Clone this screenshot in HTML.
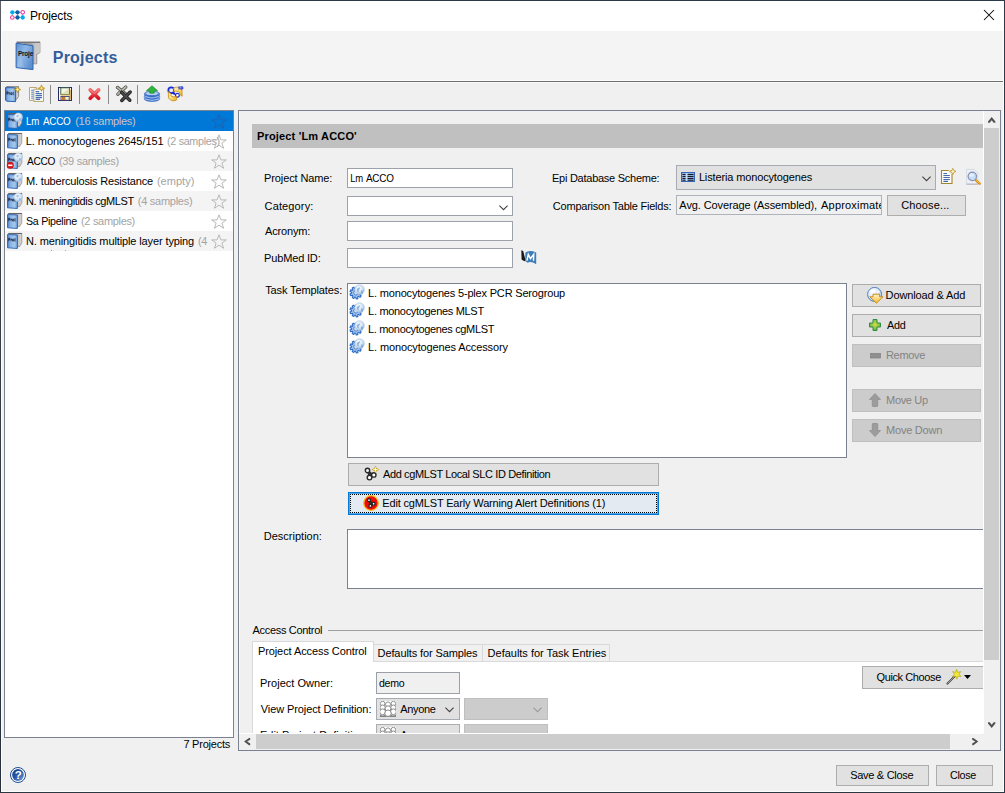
<!DOCTYPE html>
<html>
<head>
<meta charset="utf-8">
<title>Projects</title>
<style>
*{box-sizing:border-box;margin:0;padding:0}
html,body{width:1005px;height:793px;overflow:hidden;background:#f0f0f0}
body{font-family:"Liberation Sans",sans-serif;font-size:11px;color:#000;position:relative}
#win{position:absolute;left:0;top:0;width:1005px;height:793px;background:#f0f0f0;overflow:hidden}
.a{position:absolute}
svg{position:absolute;overflow:visible}
#title{position:absolute;left:2px;top:1px;width:1002px;height:30px;background:#fff}
#hdr{position:absolute;left:2px;top:31px;width:1001px;height:50px;background:#f4f4f4}
#sep{position:absolute;left:1px;top:80px;width:1003px;height:3px;background:#6e6e6e;border-top:1px solid #fcfcfc;border-bottom:1px solid #f9f9f9}
.tsep{position:absolute;top:85px;width:1px;height:19px;background:#8c8c8c}
#list{position:absolute;left:4px;top:110px;width:230px;height:628px;background:#fff;border:1px solid #7a828f}
.row{position:absolute;left:0;width:228px;height:20px;overflow:hidden}
.row.alt{background:#f4f4f4}
.row.sel{background:#0078d7}
.t{position:absolute;white-space:nowrap;font-size:11px;line-height:14px}
.g{color:#a3a3a3}
.sel .t{color:#fff}
.sel .g{color:#c9c5c6}
#panel{position:absolute;left:238px;top:110px;width:763px;height:641px;border:1px solid #7a828f;background:#f0f0f0;overflow:hidden}
.inp{position:absolute;background:#fff;border:1px solid #9ca1ab}
.lb{position:absolute;background:#fff;border:1px solid #7a828f}
.ro{background:#f0f0f0;border-color:#adb2bb}
.btn{position:absolute;background:#e1e1e1;border:1px solid #adadad}
.btn.dis{background:#cccccc;border-color:#bfbfbf}
.dis{color:#838383}
</style>
</head>
<body>
<div id="win">
<svg width="0" height="0" style="left:0;top:0"><defs>
<linearGradient id="gb" x1="0" y1="0" x2="1" y2="1"><stop offset="0" stop-color="#8fb4e3"/><stop offset="1" stop-color="#4478bd"/></linearGradient>
<linearGradient id="gg" x1="0" y1="0" x2="1" y2="0"><stop offset="0" stop-color="#8e8e8e"/><stop offset="1" stop-color="#d9d9d9"/></linearGradient>
<radialGradient id="gl" cx=".4" cy=".35" r=".7"><stop offset="0" stop-color="#ffffff"/><stop offset=".6" stop-color="#cfe2f4"/><stop offset="1" stop-color="#8db4dc"/></radialGradient>
<linearGradient id="gy" x1="0" y1="0" x2="0" y2="1"><stop offset="0" stop-color="#ffe680"/><stop offset="1" stop-color="#e8a200"/></linearGradient>
<linearGradient id="gd" x1="0" y1="0" x2="0" y2="1"><stop offset="0" stop-color="#9cc0f0"/><stop offset="1" stop-color="#2f66c4"/></linearGradient>
<linearGradient id="gb2" x1="0" y1="0" x2="1" y2="0"><stop offset="0" stop-color="#3f78c6"/><stop offset=".25" stop-color="#86b0e4"/><stop offset=".7" stop-color="#a6c8ee"/><stop offset="1" stop-color="#6c9cd8"/></linearGradient>
<linearGradient id="gr" x1="0" y1="0" x2="0" y2="1"><stop offset="0" stop-color="#f26a6a"/><stop offset="1" stop-color="#d41420"/></linearGradient>
<radialGradient id="gl2" cx=".35" cy=".3" r=".8"><stop offset="0" stop-color="#ffffff"/><stop offset=".5" stop-color="#dbe9f8"/><stop offset="1" stop-color="#a9c6ea"/></radialGradient>
<linearGradient id="gy2" x1="0" y1="0" x2="0" y2="1"><stop offset="0" stop-color="#fff6cc"/><stop offset="1" stop-color="#f6b830"/></linearGradient>
<radialGradient id="gp" cx=".5" cy=".45" r=".6"><stop offset="0" stop-color="#d4dc48"/><stop offset=".6" stop-color="#8cc444"/><stop offset="1" stop-color="#3fa046"/></radialGradient>
<linearGradient id="gg2" x1="0" y1="0" x2="1" y2="0"><stop offset="0" stop-color="#7e7e7e"/><stop offset=".6" stop-color="#a8a8a8"/><stop offset="1" stop-color="#c9c9c9"/></linearGradient>
<linearGradient id="gb3" x1="0" y1="0" x2="1" y2=".6"><stop offset="0" stop-color="#5b8ed0"/><stop offset=".5" stop-color="#8fb8e6"/><stop offset="1" stop-color="#5d8fd0"/></linearGradient>
<linearGradient id="gh" x1="0" y1="0" x2="1" y2="1"><stop offset="0" stop-color="#123f88"/><stop offset=".5" stop-color="#2a5aa6"/><stop offset="1" stop-color="#7aa2da"/></linearGradient>
<linearGradient id="gy3" x1="0" y1="0" x2="1" y2="1"><stop offset="0" stop-color="#fff8d8"/><stop offset=".5" stop-color="#fbdc78"/><stop offset="1" stop-color="#e9a818"/></linearGradient>
</defs></svg>
<div id="title"></div>
<svg style="left:10px;top:10px" width="15" height="10" viewBox="0 0 15 10"><path d="M2.3 2.3H12.7M2.3 7.5H12.7M2.3 2.3V7.5M7.5 2.3V7.5M12.7 2.3V7.5" stroke="#5fa8d8" stroke-width=".7"/><circle cx="2.3" cy="2.3" r="2.15" fill="#00aeef"/><circle cx="7.5" cy="2.3" r="2.15" fill="#0a5fa5"/><circle cx="12.7" cy="2.3" r="1.8" fill="#fff" stroke="#ec3d96" stroke-width="1.1"/><circle cx="2.3" cy="7.5" r="1.8" fill="#fff" stroke="#ec3d96" stroke-width="1.1"/><circle cx="7.5" cy="7.5" r="2.15" fill="#0a5fa5"/><circle cx="12.7" cy="7.5" r="2.15" fill="#00aeef"/></svg>
<span class="t" style="left:30.0px;top:9px;letter-spacing:-0.134px;font-size:12px;line-height:15px;">Projects</span>
<svg style="left:984px;top:10px" width="10" height="10" viewBox="0 0 10 10"><path d="M0 0L10 10M10 0L0 10" stroke="#000" stroke-width="1.05"/></svg>
<div id="hdr"></div>
<svg style="left:15px;top:42px" width="25" height="28" viewBox="0 0 25 28"><path d="M1.8 0H25V10.7L21.8 12.4V21.8H17V3Z" fill="url(#gg2)" stroke="#7a7a7a" stroke-width=".6"/><path d="M19 1V21.500M20.400 1V21.500M21.800 1V12M23.200 1V11.400M24.400 1V10.800" stroke="#e4e4e4" stroke-width=".55" opacity=".8"/><path d="M1.8 .3H25" stroke="#6a6a6a" stroke-width=".9"/><path d="M1.100 1.100L18 3.800V27.600L1.100 25.600Z" fill="url(#gb3)" stroke="#2d62ae" stroke-width="1"/><path d="M3 4.500L9.500 26.200L3 25.300Z" fill="#fff" opacity=".10"/><text x="3" y="13.500" font-family="Liberation Sans" font-weight="bold" font-size="6.4" letter-spacing="-.2" fill="#0c1220">Proje</text></svg>
<span class="t" style="left:52.8px;top:48px;letter-spacing:0.203px;font-size:16px;font-weight:bold;color:#325e9c;line-height:20px;">Projects</span>
<div id="sep"></div>
<div class="tsep" style="left:50px"></div>
<div class="tsep" style="left:79px"></div>
<div class="tsep" style="left:108px"></div>
<div class="tsep" style="left:137px"></div>
<svg style="left:5px;top:86px" width="16" height="16" viewBox="0 0 16 16"><path d="M1.5 .6H13.6V10.4L11.6 13.4H10V2.6Z" fill="url(#gg)" stroke="#6f6f6f" stroke-width=".7"/><path d="M.5 1.6L10.6 1.9V15.6L1.6 15.2L.5 14Z" fill="url(#gb2)" stroke="#2a63b2" stroke-width="1"/><path transform="translate(-.3 .6)" d="M2.200 5v3.200M2.200 5.300h1.300v1.300H2.200M4.500 6v2.200M4.500 6.300h1M6.100 6.200h1.200v1.800H6.100zM8.500 5.200v3.400" stroke="#14203a" stroke-width=".85" fill="none" opacity=".9"/><path d="M12.5 .1L13.5 2.5L15.9 3.5L13.5 4.5L12.5 6.9L11.5 4.5L9.1 3.5L11.5 2.5Z" fill="#e2b21c" stroke="#b98a10" stroke-width=".5"/><path d="M12.5 1.6L12.9 3.1L14.4 3.5L12.9 3.9L12.5 5.4L12.1 3.9L10.6 3.5L12.1 3.1Z" fill="#fffbe0"/></svg>
<svg style="left:29px;top:86px" width="16" height="16" viewBox="0 0 16 16"><path d="M.5 1.5H7.6V14.4H.5Z" fill="#fdfdf8" stroke="#b7a876" stroke-width="1"/><path d="M2.2 4.2H4.4M2.2 6.2H4.4M2.2 8.2H4.4M2.2 10.2H4.4M2.2 12.2H4.4" stroke="#5676b4" stroke-width="1"/><path d="M4.8 3.2H14.5V15.4H4.8Z" fill="#fdfdf8" stroke="#b0a272" stroke-width="1"/><path d="M6.6 5.6H10.2M6.6 7.6H13M6.6 9.6H13M6.6 11.6H13M6.6 13.4H11" stroke="#4c6fb2" stroke-width="1.1"/><path d="M12.5 -1.2L13.5 1.2L15.9 2.2L13.5 3.2L12.5 5.6L11.5 3.2L9.1 2.2L11.5 1.2Z" fill="#d6a626" stroke="#b98a10" stroke-width=".5"/><path d="M12.5 .3L12.9 1.8L14.4 2.2L12.9 2.6L12.5 4.1L12.1 2.6L10.6 2.2L12.1 1.8Z" fill="#fffbe0"/></svg>
<svg style="left:58px;top:87px" width="14" height="14" viewBox="0 0 14 14"><rect x=".5" y=".5" width="13" height="13" fill="#f3ecc8" stroke="#2a2a64" stroke-width="1"/><rect x="1" y="1" width="1.6" height="12" fill="#fffbe6"/><rect x="2.8" y=".8" width="8.6" height="6.6" fill="#f6f6ea" stroke="#2f5c3a" stroke-width=".9"/><path d="M3.4 7L11 1.2V7Z" fill="#d9dcae" opacity=".8"/><path d="M2.6 8H12.4" stroke="#d9b060" stroke-width="1"/><path d="M12.4 3V12.6" stroke="#d9b060" stroke-width="1"/><rect x="3" y="9.4" width="8.2" height="3.8" fill="#fbf4d0" stroke="#2a2a64" stroke-width=".8"/><rect x="3.8" y="10" width="3.6" height="3" fill="#c47a32"/><rect x="12" y="1" width="1" height="1.2" fill="#fff"/></svg>
<svg style="left:88px;top:88px" width="13" height="12" viewBox="0 0 13 12"><path d="M2.2 1.9L10.6 10.3M10.6 1.9L2.2 10.3" stroke="url(#gr)" stroke-width="3.7" stroke-linecap="round"/><path d="M2.4 1.9L6.4 5.6L10.4 1.9" fill="none" stroke="#f68a8a" stroke-width="1.1" stroke-linecap="round" opacity=".8"/></svg>
<svg style="left:116px;top:86px" width="16" height="16" viewBox="0 0 16 16"><path d="M1.400 1.400L9.600 7.800M9.800 1L1.800 8.200" stroke="#55554e" stroke-width="3.300" stroke-linecap="round"/><path d="M1.400 1.400L9.600 7.800M9.800 1L1.800 8.200" stroke="#b9b9b0" stroke-width="1.700" stroke-linecap="round"/><path d="M5.600 6.200L13.800 14.200M14.200 6L5.800 14.400" stroke="#2a2a2a" stroke-width="3.500" stroke-linecap="round"/><path d="M5.600 6.200L13.800 14.200M14.200 6L5.800 14.400" stroke="#505050" stroke-width="1.200" stroke-linecap="round"/></svg>
<svg style="left:144px;top:86px" width="17" height="16" viewBox="0 0 17 16"><ellipse cx="8" cy="12.700" rx="7.800" ry="2.800" fill="url(#gd)" stroke="#2f63c0" stroke-width=".6"/><ellipse cx="8" cy="10.300" rx="7.800" ry="2.800" fill="url(#gd)" stroke="#2f63c0" stroke-width=".6"/><ellipse cx="8" cy="7.900" rx="7.800" ry="2.800" fill="url(#gd)" stroke="#2f63c0" stroke-width=".6"/><path d="M1.200 10.600Q8 13.600 14.800 10.600M1.200 13Q8 16 14.800 13" fill="none" stroke="#cfe0fb" stroke-width=".7" opacity=".9"/><ellipse cx="8" cy="7.500" rx="5.600" ry="1.500" fill="#d4e4fb" opacity=".8"/><path d="M8 -.2L13.600 4.800H10.200V7.200H5.800V4.800H2.400Z" fill="#2db63a" stroke="#178a2a" stroke-width=".7"/></svg>
<svg style="left:164px;top:83px" width="24" height="22" viewBox="0 0 24 22"><circle cx="7.200" cy="7.300" r="2.900" fill="#e6e8fb" stroke="#1a2ce0" stroke-width="1.700"/><path d="M8.800 9.600L11 11.200" stroke="#1420c8" stroke-width="2"/><circle cx="13.400" cy="12.300" r="1.900" fill="#fff" stroke="#1a2ce0" stroke-width="1.200"/><path d="M9.300 5.800C11.300 3.400 15.600 3.600 17.900 7.200L18.100 13.300L14.900 10.600L15.900 9.700C14.200 7.900 12 7.800 9.600 8.800C10.400 7.600 10.300 6.600 9.300 5.800Z" fill="url(#gy3)" stroke="#c4860c" stroke-width=".8" stroke-linejoin="round"/><path d="M13.100 16.200C11.100 18.600 6.800 18.400 4.500 14.800L4.300 8.700L7.500 11.400L6.500 12.300C8.200 14.100 10.400 14.200 12.800 13.200C12 14.400 12.100 15.400 13.100 16.200Z" fill="url(#gy3)" stroke="#c4860c" stroke-width=".8" stroke-linejoin="round"/><path d="M15.100 3.300V6.500" stroke="#1a2ce0" stroke-width="1.100"/><path d="M17 3.800V6H17.800Q18.900 6 18.900 4.900T17.800 3.800Z" fill="none" stroke="#1a2ce0" stroke-width="1.100"/></svg>
<div id="list">
<div class="row sel" style="top:0px"><svg style="left:2px;top:2px" width="16" height="16" viewBox="0 0 16 16"><path d="M1.400 .4H14.800V9.800L12.600 13.600H10V2.400Z" fill="url(#gg)" stroke="#747474" stroke-width=".6"/><path d="M1.400 .5H14.800" stroke="#5e5e5e" stroke-width=".9"/><path d="M.5 1.500L10.400 2V15.500L.5 14.800Z" fill="url(#gb2)" stroke="#2c63b0" stroke-width=".9"/><path transform="translate(-.5 0)" d="M2.200 5v3.200M2.200 5.300h1.300v1.300H2.200M4.500 6v2.200M4.500 6.300h1M6.100 6.200h1.200v1.800H6.100zM8.500 5.200v3.400" stroke="#14203a" stroke-width=".85" fill="none" opacity=".9"/><circle cx="11.300" cy="4.200" r="4.200" fill="url(#gl)" stroke="#c4d6ea" stroke-width=".5"/><path d="M9.300 2.600q1.500-1 2.700-.2q-.3 1.600-1.500 2q-1.400-.4-1.200-1.800zM12 5.300q1.400-.3 2.200.6q-.7 1.400-1.900 1.300z" fill="#7fa9d6" opacity=".75"/></svg><span class="t" style="left:20.9px;top:3px;letter-spacing:-0.300px;transform:scaleX(0.8777);transform-origin:1.00px 0;">Lm</span><span class="t" style="left:38.46px;top:3px;letter-spacing:-0.300px;transform:scaleX(0.8977);transform-origin:0.14px 0;">ACCO</span><span class="t g" style="left:70.24px;top:3px;letter-spacing:-0.280px;">(16 samples)</span><svg style="left:206px;top:3px" width="16" height="15" viewBox="0 0 16 15"><path d="M8 .8L9.9 5.9H15.3L10.9 9.1L12.6 14.3L8 11.1L3.4 14.3L5.1 9.1L.7 5.9H6.1Z" fill="none" stroke="#1d63b0" stroke-width="1"/></svg></div>
<div class="row" style="top:20px"><svg style="left:2px;top:2px" width="16" height="16" viewBox="0 0 16 16"><path d="M1.400 .4H14.800V9.800L12.600 13.600H10V2.400Z" fill="url(#gg)" stroke="#747474" stroke-width=".6"/><path d="M1.400 .5H14.800" stroke="#5e5e5e" stroke-width=".9"/><path d="M.5 1.500L10.400 2V15.500L.5 14.800Z" fill="url(#gb2)" stroke="#2c63b0" stroke-width=".9"/><path transform="translate(-.5 0)" d="M2.200 5v3.200M2.200 5.300h1.300v1.300H2.200M4.500 6v2.200M4.500 6.300h1M6.100 6.200h1.200v1.800H6.100zM8.500 5.200v3.400" stroke="#14203a" stroke-width=".85" fill="none" opacity=".9"/></svg><span class="t" style="left:20.7px;top:3px;letter-spacing:-0.034px;">L. monocytogenes 2645/151</span><span class="t g" style="left:161.94px;top:3px;letter-spacing:-0.300px;transform:scaleX(0.9735);transform-origin:0.66px 0;">(2 samples)</span><svg style="left:206px;top:3px" width="16" height="15" viewBox="0 0 16 15"><path d="M8 .8L9.9 5.9H15.3L10.9 9.1L12.6 14.3L8 11.1L3.4 14.3L5.1 9.1L.7 5.9H6.1Z" fill="none" stroke="#b9b9b9" stroke-width="1"/></svg></div>
<div class="row alt" style="top:40px"><svg style="left:2px;top:2px" width="16" height="16" viewBox="0 0 16 16"><path d="M1.400 .4H14.800V9.800L12.600 13.600H10V2.400Z" fill="url(#gg)" stroke="#747474" stroke-width=".6"/><path d="M1.400 .5H14.800" stroke="#5e5e5e" stroke-width=".9"/><path d="M.5 1.500L10.400 2V15.500L.5 14.800Z" fill="url(#gb2)" stroke="#2c63b0" stroke-width=".9"/><path transform="translate(-.5 0)" d="M2.200 5v3.200M2.200 5.300h1.300v1.300H2.200M4.500 6v2.200M4.500 6.300h1M6.100 6.200h1.200v1.800H6.100zM8.500 5.200v3.400" stroke="#14203a" stroke-width=".85" fill="none" opacity=".9"/><circle cx="11.300" cy="4.200" r="4.200" fill="url(#gl)" stroke="#c4d6ea" stroke-width=".5"/><path d="M9.300 2.600q1.500-1 2.700-.2q-.3 1.600-1.500 2q-1.400-.4-1.200-1.800zM12 5.300q1.400-.3 2.200.6q-.7 1.400-1.900 1.300z" fill="#7fa9d6" opacity=".75"/><circle cx="3.300" cy="12.300" r="3.500" fill="#d4141c"/><rect x="1.200" y="11.500" width="4.200" height="1.600" fill="#fff"/></svg><span class="t" style="left:21.96px;top:3px;letter-spacing:-0.300px;transform:scaleX(0.9207);transform-origin:0.14px 0;">ACCO</span><span class="t g" style="left:53.94px;top:3px;letter-spacing:-0.298px;">(39 samples)</span><svg style="left:206px;top:3px" width="16" height="15" viewBox="0 0 16 15"><path d="M8 .8L9.9 5.9H15.3L10.9 9.1L12.6 14.3L8 11.1L3.4 14.3L5.1 9.1L.7 5.9H6.1Z" fill="none" stroke="#b9b9b9" stroke-width="1"/></svg></div>
<div class="row" style="top:60px"><svg style="left:2px;top:2px" width="16" height="16" viewBox="0 0 16 16"><path d="M1.400 .4H14.800V9.800L12.600 13.600H10V2.400Z" fill="url(#gg)" stroke="#747474" stroke-width=".6"/><path d="M1.400 .5H14.800" stroke="#5e5e5e" stroke-width=".9"/><path d="M.5 1.500L10.400 2V15.500L.5 14.800Z" fill="url(#gb2)" stroke="#2c63b0" stroke-width=".9"/><path transform="translate(-.5 0)" d="M2.200 5v3.200M2.200 5.300h1.300v1.300H2.200M4.500 6v2.200M4.500 6.300h1M6.100 6.200h1.200v1.800H6.100zM8.500 5.200v3.400" stroke="#14203a" stroke-width=".85" fill="none" opacity=".9"/><circle cx="11.300" cy="4.200" r="4.200" fill="url(#gl)" stroke="#c4d6ea" stroke-width=".5"/><path d="M9.300 2.600q1.500-1 2.700-.2q-.3 1.600-1.500 2q-1.400-.4-1.200-1.800zM12 5.300q1.400-.3 2.200.6q-.7 1.400-1.900 1.300z" fill="#7fa9d6" opacity=".75"/></svg><span class="t" style="left:21.0px;top:3px;letter-spacing:-0.172px;">M. tuberculosis Resistance</span><span class="t g" style="left:151.94px;top:3px;letter-spacing:0.022px;">(empty)</span><svg style="left:206px;top:3px" width="16" height="15" viewBox="0 0 16 15"><path d="M8 .8L9.9 5.9H15.3L10.9 9.1L12.6 14.3L8 11.1L3.4 14.3L5.1 9.1L.7 5.9H6.1Z" fill="none" stroke="#b9b9b9" stroke-width="1"/></svg></div>
<div class="row alt" style="top:80px"><svg style="left:2px;top:2px" width="16" height="16" viewBox="0 0 16 16"><path d="M1.400 .4H14.800V9.800L12.600 13.600H10V2.400Z" fill="url(#gg)" stroke="#747474" stroke-width=".6"/><path d="M1.400 .5H14.800" stroke="#5e5e5e" stroke-width=".9"/><path d="M.5 1.500L10.400 2V15.500L.5 14.800Z" fill="url(#gb2)" stroke="#2c63b0" stroke-width=".9"/><path transform="translate(-.5 0)" d="M2.200 5v3.200M2.200 5.300h1.300v1.300H2.200M4.500 6v2.200M4.500 6.300h1M6.100 6.200h1.200v1.800H6.100zM8.500 5.200v3.400" stroke="#14203a" stroke-width=".85" fill="none" opacity=".9"/><circle cx="11.300" cy="4.200" r="4.200" fill="url(#gl)" stroke="#c4d6ea" stroke-width=".5"/><path d="M9.300 2.600q1.500-1 2.700-.2q-.3 1.600-1.500 2q-1.400-.4-1.200-1.800zM12 5.300q1.400-.3 2.200.6q-.7 1.400-1.900 1.300z" fill="#7fa9d6" opacity=".75"/></svg><span class="t" style="left:21.0px;top:3px;letter-spacing:-0.375px;">N. meningitidis cgMLST</span><span class="t g" style="left:132.74px;top:3px;letter-spacing:-0.261px;">(4 samples)</span><svg style="left:206px;top:3px" width="16" height="15" viewBox="0 0 16 15"><path d="M8 .8L9.9 5.9H15.3L10.9 9.1L12.6 14.3L8 11.1L3.4 14.3L5.1 9.1L.7 5.9H6.1Z" fill="none" stroke="#b9b9b9" stroke-width="1"/></svg></div>
<div class="row" style="top:100px"><svg style="left:2px;top:2px" width="16" height="16" viewBox="0 0 16 16"><path d="M1.400 .4H14.800V9.800L12.600 13.600H10V2.400Z" fill="url(#gg)" stroke="#747474" stroke-width=".6"/><path d="M1.400 .5H14.800" stroke="#5e5e5e" stroke-width=".9"/><path d="M.5 1.500L10.400 2V15.500L.5 14.800Z" fill="url(#gb2)" stroke="#2c63b0" stroke-width=".9"/><path transform="translate(-.5 0)" d="M2.200 5v3.200M2.200 5.300h1.300v1.300H2.200M4.500 6v2.200M4.500 6.300h1M6.100 6.200h1.200v1.800H6.100zM8.500 5.200v3.400" stroke="#14203a" stroke-width=".85" fill="none" opacity=".9"/></svg><span class="t" style="left:21.34px;top:3px;letter-spacing:-0.300px;transform:scaleX(0.9701);transform-origin:0.66px 0;">Sa Pipeline</span><span class="t g" style="left:76.04px;top:3px;letter-spacing:-0.321px;">(2 samples)</span><svg style="left:206px;top:3px" width="16" height="15" viewBox="0 0 16 15"><path d="M8 .8L9.9 5.9H15.3L10.9 9.1L12.6 14.3L8 11.1L3.4 14.3L5.1 9.1L.7 5.9H6.1Z" fill="none" stroke="#b9b9b9" stroke-width="1"/></svg></div>
<div class="row alt" style="top:120px"><svg style="left:2px;top:2px" width="16" height="16" viewBox="0 0 16 16"><path d="M1.400 .4H14.800V9.800L12.600 13.600H10V2.400Z" fill="url(#gg)" stroke="#747474" stroke-width=".6"/><path d="M1.400 .5H14.800" stroke="#5e5e5e" stroke-width=".9"/><path d="M.5 1.500L10.400 2V15.500L.5 14.800Z" fill="url(#gb2)" stroke="#2c63b0" stroke-width=".9"/><path transform="translate(-.5 0)" d="M2.200 5v3.200M2.200 5.300h1.300v1.300H2.200M4.500 6v2.200M4.500 6.300h1M6.100 6.200h1.200v1.800H6.100zM8.500 5.200v3.400" stroke="#14203a" stroke-width=".85" fill="none" opacity=".9"/></svg><span class="t" style="left:21.0px;top:3px;letter-spacing:-0.116px;">N. meningitidis multiple layer typing</span><span class="t g" style="left:193.04px;top:3px;letter-spacing:-0.300px;transform:scaleX(0.9864);transform-origin:0.66px 0;">(4</span><svg style="left:206px;top:3px" width="16" height="15" viewBox="0 0 16 15"><path d="M8 .8L9.9 5.9H15.3L10.9 9.1L12.6 14.3L8 11.1L3.4 14.3L5.1 9.1L.7 5.9H6.1Z" fill="none" stroke="#b9b9b9" stroke-width="1"/></svg><div class="a" style="left:46px;top:19px;width:1px;height:1px;background:#9a9a9a"></div><div class="a" style="left:60px;top:19px;width:1px;height:1px;background:#ababab"></div></div>
</div>
<span class="t" style="left:183.4px;top:737px;letter-spacing:-0.227px;">7 Projects</span>
<div id="panel"></div>
<div class="a" style="left:239px;top:111px;width:1px;height:639px;background:#f8f8f8"></div>
<div class="a" style="left:252px;top:124px;width:731px;height:24px;background:#c0c0c0"></div>
<span class="t" style="left:256.94px;top:129px;letter-spacing:0.168px;font-weight:bold;">Project 'Lm ACCO'</span>
<span class="t" style="left:264.1px;top:171px;letter-spacing:-0.120px;">Project Name:</span>
<span class="t" style="left:264.57px;top:199px;letter-spacing:0.136px;">Category:</span>
<span class="t" style="left:264.96px;top:224px;letter-spacing:-0.160px;">Acronym:</span>
<span class="t" style="left:264.1px;top:251px;letter-spacing:-0.164px;">PubMed ID:</span>
<div class="inp" style="left:347px;top:168px;width:166px;height:20px"></div>
<span class="t" style="left:349.5px;top:171px;letter-spacing:-0.300px;transform:scaleX(0.8627);transform-origin:1.00px 0;">Lm</span><span class="t" style="left:366.26px;top:171px;letter-spacing:-0.300px;transform:scaleX(0.9010);transform-origin:0.14px 0;">ACCO</span>
<div class="inp" style="left:347px;top:196px;width:166px;height:20px"></div>
<svg style="left:498.5px;top:205px" width="9" height="6" viewBox="0 0 9 6"><path d="M.4 .6L4.5 4.7L8.6 .6" fill="none" stroke="#404040" stroke-width="1.05"/></svg>
<div class="inp" style="left:347px;top:221px;width:166px;height:20px"></div>
<div class="inp" style="left:347px;top:248px;width:166px;height:20px"></div>
<svg style="left:521px;top:250px" width="16" height="15" viewBox="0 0 16 15"><path d="M.3 .2L2.2 .9L4.6 10.6L3.4 11.2L.6 9.6Z" fill="#16181c"/><path d="M4.4 2.6Q8 -.4 15.2 2.4V14.2Q10 10.6 6.6 12.8L4.2 11Z" fill="#3b7cba"/><path d="M5.9 10.6L7.3 4.4L9.5 8.6L12.7 4.4L12.5 10.8" fill="none" stroke="#fff" stroke-width="1.5" stroke-linejoin="miter"/></svg>
<span class="t" style="left:552.0px;top:171px;letter-spacing:-0.256px;">Epi Database Scheme:</span>
<span class="t" style="left:552.87px;top:199px;letter-spacing:-0.231px;">Comparison Table Fields:</span>
<div class="a" style="left:676px;top:165px;width:260px;height:25px;background:#e1e1e1;border:1px solid #a6abb4"></div>
<svg style="left:681px;top:172px" width="14" height="10" viewBox="0 0 14 10"><rect x=".5" y=".5" width="13" height="9" fill="#9dbfea" stroke="#3567b9" stroke-width="1"/><rect x="4.600" y="1" width="1.800" height="8" fill="#c6dbf5"/><path d="M1.400 2.400H4.600M6.600 2.400H12.600M1.400 4.400H4.600M6.600 4.400H12.600M1.400 6.400H4.600M6.600 6.400H12.600M1.400 8.200H4.600M6.600 8.200H12.600" stroke="#0a0a14" stroke-width="1"/></svg>
<span class="t" style="left:698.9px;top:170px;letter-spacing:-0.138px;">Listeria monocytogenes</span>
<svg style="left:921.5px;top:175.5px" width="9" height="6" viewBox="0 0 9 6"><path d="M.4 .6L4.5 4.7L8.6 .6" fill="none" stroke="#404040" stroke-width="1.05"/></svg>
<div class="inp ro" style="left:676px;top:195px;width:206px;height:20px;overflow:hidden"></div>
<div class="a" style="left:677px;top:196px;width:204px;height:18px;overflow:hidden"><span class="t" style="left:2.36px;top:2px;letter-spacing:-0.107px;">Avg. Coverage (Assembled),</span><span class="t" style="left:144.06px;top:2px;letter-spacing:0.192px;">Approximated</span></div>
<div class="btn" style="left:887px;top:195px;width:79px;height:21px"></div>
<span class="t" style="left:901.27px;top:198px;letter-spacing:0.131px;">Choose...</span>
<svg style="left:941px;top:169px" width="16" height="16" viewBox="0 0 16 16"><path d="M.5 1.5H11V14.5H.5Z" fill="#fdfdfa" stroke="#a5862a" stroke-width="1.1"/><path d="M2.4 4.5H6M2.4 6.5H8.8M2.4 8.5H8.8M2.4 10.5H8.8M2.4 12.4H7" stroke="#4668ae" stroke-width="1.1"/><path d="M7.6 1.2H11.4V5H7.6Z" fill="#f0f0f0"/><path d="M11.8 -.6L12.8 1.6L15 2.4L12.8 3.4L11.8 5.6L10.8 3.4L8.6 2.4L10.8 1.6Z" fill="#fbf3cf" stroke="#c29a2a" stroke-width=".9"/></svg>
<svg style="left:966px;top:169px" width="16" height="16" viewBox="0 0 16 16"><path d="M.6 .4H8.4L11.8 3.8V15H.6Z" fill="#edf1f7" stroke="#cfd5de" stroke-width=".8"/><path d="M.4 15.2H12" stroke="#a8aeb8" stroke-width=".9"/><path d="M9.4 10.6L13.6 14.6" stroke="#d8901a" stroke-width="2.6" stroke-linecap="round"/><path d="M9.6 10.4L13.4 14" stroke="#f6c860" stroke-width=".9" stroke-linecap="round"/><circle cx="6.3" cy="7.4" r="4.2" fill="#c3def8" stroke="#8b8fb2" stroke-width="1.2"/><ellipse cx="5.6" cy="6.2" rx="2.4" ry="1.8" fill="#e6f2fd" opacity=".9"/></svg>
<span class="t" style="left:265.24px;top:283px;letter-spacing:-0.122px;">Task Templates:</span>
<div class="lb" style="left:347px;top:283px;width:500px;height:175px"></div>
<svg style="left:349px;top:285px" width="16" height="16" viewBox="0 0 16 16"><g transform="translate(.8 -1.6)"><path d="M10.48 8.40L12.23 8.51L12.23 10.29L10.48 10.40L10.13 11.38L11.40 12.60L10.25 13.96L8.84 12.92L7.93 13.44L8.13 15.19L6.37 15.50L5.95 13.79L4.93 13.61L3.95 15.07L2.41 14.18L3.19 12.61L2.52 11.81L0.83 12.30L0.22 10.63L1.83 9.92L1.83 8.88L0.22 8.17L0.83 6.50L2.52 6.99L3.19 6.19L2.41 4.62L3.95 3.73L4.93 5.19L5.95 5.01L6.37 3.30L8.13 3.61L7.93 5.36L8.84 5.88L10.25 4.84L11.40 6.20L10.13 7.42Z" fill="#a9c7ee" stroke="#2d6cc4" stroke-width="1.1" stroke-linejoin="round"/><circle cx="6.2" cy="9.4" r="2.3" fill="#dbe8f8" stroke="#3a74c6" stroke-width=".9"/></g><circle cx="10.5" cy="4.6" r="4.8" fill="url(#gl)" stroke="#a9bfdc" stroke-width=".6"/><path d="M7.8 4.2q1.4-2.2 3.2-1.6q0 1.800-1.400 2.600q.6 1.400-.4 2.600q-1.600-1.200-1.400-3.600zM12 5.600q1.600-.2 2.400 1q-.8 1.800-2.200 1.600z" fill="#6f9fd6" opacity=".75"/></svg>
<span class="t" style="left:368.1px;top:286px;letter-spacing:-0.181px;">L. monocytogenes 5-plex PCR Serogroup</span>
<svg style="left:349px;top:303px" width="16" height="16" viewBox="0 0 16 16"><g transform="translate(.8 -1.6)"><path d="M10.48 8.40L12.23 8.51L12.23 10.29L10.48 10.40L10.13 11.38L11.40 12.60L10.25 13.96L8.84 12.92L7.93 13.44L8.13 15.19L6.37 15.50L5.95 13.79L4.93 13.61L3.95 15.07L2.41 14.18L3.19 12.61L2.52 11.81L0.83 12.30L0.22 10.63L1.83 9.92L1.83 8.88L0.22 8.17L0.83 6.50L2.52 6.99L3.19 6.19L2.41 4.62L3.95 3.73L4.93 5.19L5.95 5.01L6.37 3.30L8.13 3.61L7.93 5.36L8.84 5.88L10.25 4.84L11.40 6.20L10.13 7.42Z" fill="#a9c7ee" stroke="#2d6cc4" stroke-width="1.1" stroke-linejoin="round"/><circle cx="6.2" cy="9.4" r="2.3" fill="#dbe8f8" stroke="#3a74c6" stroke-width=".9"/></g><circle cx="10.5" cy="4.6" r="4.8" fill="url(#gl)" stroke="#a9bfdc" stroke-width=".6"/><path d="M7.8 4.2q1.4-2.2 3.2-1.6q0 1.800-1.400 2.600q.6 1.400-.4 2.600q-1.600-1.200-1.400-3.600zM12 5.600q1.600-.2 2.400 1q-.8 1.800-2.200 1.600z" fill="#6f9fd6" opacity=".75"/></svg>
<span class="t" style="left:368.1px;top:304px;letter-spacing:-0.314px;">L. monocytogenes MLST</span>
<svg style="left:349px;top:321px" width="16" height="16" viewBox="0 0 16 16"><g transform="translate(.8 -1.6)"><path d="M10.48 8.40L12.23 8.51L12.23 10.29L10.48 10.40L10.13 11.38L11.40 12.60L10.25 13.96L8.84 12.92L7.93 13.44L8.13 15.19L6.37 15.50L5.95 13.79L4.93 13.61L3.95 15.07L2.41 14.18L3.19 12.61L2.52 11.81L0.83 12.30L0.22 10.63L1.83 9.92L1.83 8.88L0.22 8.17L0.83 6.50L2.52 6.99L3.19 6.19L2.41 4.62L3.95 3.73L4.93 5.19L5.95 5.01L6.37 3.30L8.13 3.61L7.93 5.36L8.84 5.88L10.25 4.84L11.40 6.20L10.13 7.42Z" fill="#a9c7ee" stroke="#2d6cc4" stroke-width="1.1" stroke-linejoin="round"/><circle cx="6.2" cy="9.4" r="2.3" fill="#dbe8f8" stroke="#3a74c6" stroke-width=".9"/></g><circle cx="10.5" cy="4.6" r="4.8" fill="url(#gl)" stroke="#a9bfdc" stroke-width=".6"/><path d="M7.8 4.2q1.4-2.2 3.2-1.6q0 1.800-1.400 2.600q.6 1.400-.4 2.600q-1.600-1.200-1.400-3.600zM12 5.600q1.600-.2 2.400 1q-.8 1.800-2.200 1.600z" fill="#6f9fd6" opacity=".75"/></svg>
<span class="t" style="left:368.1px;top:322px;letter-spacing:-0.347px;">L. monocytogenes cgMLST</span>
<svg style="left:349px;top:339px" width="16" height="16" viewBox="0 0 16 16"><g transform="translate(.8 -1.6)"><path d="M10.48 8.40L12.23 8.51L12.23 10.29L10.48 10.40L10.13 11.38L11.40 12.60L10.25 13.96L8.84 12.92L7.93 13.44L8.13 15.19L6.37 15.50L5.95 13.79L4.93 13.61L3.95 15.07L2.41 14.18L3.19 12.61L2.52 11.81L0.83 12.30L0.22 10.63L1.83 9.92L1.83 8.88L0.22 8.17L0.83 6.50L2.52 6.99L3.19 6.19L2.41 4.62L3.95 3.73L4.93 5.19L5.95 5.01L6.37 3.30L8.13 3.61L7.93 5.36L8.84 5.88L10.25 4.84L11.40 6.20L10.13 7.42Z" fill="#a9c7ee" stroke="#2d6cc4" stroke-width="1.1" stroke-linejoin="round"/><circle cx="6.2" cy="9.4" r="2.3" fill="#dbe8f8" stroke="#3a74c6" stroke-width=".9"/></g><circle cx="10.5" cy="4.6" r="4.8" fill="url(#gl)" stroke="#a9bfdc" stroke-width=".6"/><path d="M7.8 4.2q1.4-2.2 3.2-1.6q0 1.800-1.400 2.600q.6 1.400-.4 2.600q-1.600-1.200-1.400-3.600zM12 5.600q1.600-.2 2.400 1q-.8 1.800-2.200 1.600z" fill="#6f9fd6" opacity=".75"/></svg>
<span class="t" style="left:368.1px;top:340px;letter-spacing:-0.128px;">L. monocytogenes Accessory</span>
<div class="btn" style="left:852px;top:284px;width:129px;height:23px"></div>
<svg style="left:867px;top:287px" width="16" height="17" viewBox="0 0 16 17"><circle cx="7.6" cy="7.4" r="7" fill="url(#gl2)" stroke="#4f7fc2" stroke-width="1"/><path d="M4 4.6q2-2.4 4.6-1.6q-.4 2-2.2 2.6q-1.6.2-2.4-1zM9.6 3.4q2.4.2 3 2.4q-1.8.6-3-.6z" fill="#fff" opacity=".9"/><path d="M6 7.2H12.6V9.8H16L9.4 16.2L2.8 9.8H6Z" fill="url(#gy2)" stroke="#c4840c" stroke-width=".9" stroke-linejoin="round"/></svg>
<span class="t" style="left:885.6px;top:288px;letter-spacing:-0.113px;">Download &amp; Add</span>
<div class="btn" style="left:852px;top:314px;width:129px;height:23px"></div>
<svg style="left:869px;top:319px" width="12" height="12" viewBox="0 0 12 12"><path d="M4 .5H8V4H11.5V8H8V11.5H4V8H.5V4H4Z" fill="url(#gp)" stroke="#2f8c44" stroke-width="1"/></svg>
<span class="t" style="left:886.86px;top:318px;letter-spacing:-0.300px;transform:scaleX(0.9858);transform-origin:0.14px 0;">Add</span>
<div class="btn dis" style="left:852px;top:344px;width:129px;height:23px"></div>
<svg style="left:870px;top:353px" width="11" height="6" viewBox="0 0 11 6"><rect x=".5" y=".4" width="10" height="4.600" fill="#8f8f8f" stroke="#868686" stroke-width=".8"/></svg>
<span class="t dis" style="left:886.0px;top:348px;letter-spacing:-0.328px;">Remove</span>
<div class="btn dis" style="left:852px;top:389px;width:129px;height:23px"></div>
<svg style="left:869px;top:393px" width="12" height="14" viewBox="0 0 12 14"><path d="M6 .5L11.500 6.400H8.700V12.800Q8.700 13.500 8 13.500H4Q3.300 13.500 3.300 12.800V6.400H.5Z" fill="#9c9c9c" stroke="#8e8e8e" stroke-width=".8" stroke-linejoin="round"/></svg>
<span class="t dis" style="left:886.1px;top:393px;letter-spacing:-0.347px;">Move Up</span>
<div class="btn dis" style="left:852px;top:419px;width:129px;height:23px"></div>
<svg style="left:869px;top:423px" width="12" height="14" viewBox="0 0 12 14"><path d="M6 13.500L11.500 7.600H8.700V1.200Q8.700 .5 8 .5H4Q3.300 .5 3.300 1.200V7.600H.5Z" fill="#9c9c9c" stroke="#8e8e8e" stroke-width=".8" stroke-linejoin="round"/></svg>
<span class="t dis" style="left:886.1px;top:423px;letter-spacing:-0.236px;">Move Down</span>
<div class="btn" style="left:348px;top:463px;width:311px;height:23px"></div>
<svg style="left:364px;top:466px" width="16" height="16" viewBox="0 0 16 16"><path d="M3.5 4.5L5.5 11.600L9.800 8.900Z" fill="#3a3a3a" stroke="#2a2a2a" stroke-width="1.2" stroke-linejoin="round"/><circle cx="3.5" cy="4.5" r="2.2" fill="#f4f4f4" stroke="#2a2a2a" stroke-width="1.4"/><circle cx="9.800" cy="8.900" r="2.2" fill="#fff" stroke="#2a2a2a" stroke-width="1.4"/><circle cx="5.5" cy="11.600" r="2.3" fill="#fff" stroke="#2a2a2a" stroke-width="1.4"/><path d="M11.5 .1L12.600 2.500L15 3.600L12.600 4.700L11.5 7.100L10.400 4.700L8 3.600L10.400 2.500Z" fill="#d2a818" stroke="#b88e10" stroke-width=".4"/><path d="M11.5 1.400V5.800M9.300 3.600H13.700" stroke="#fffbe6" stroke-width="1"/></svg>
<span class="t" style="left:382.96px;top:467px;letter-spacing:-0.377px;">Add cgMLST Local SLC ID Definition</span>
<div class="a" style="left:348px;top:492px;width:311px;height:23px;background:#e4eaf1;border:1px solid #0078d7;box-shadow:inset 0 0 0 1px #57a4e4"></div>
<div class="a" style="left:350px;top:494px;width:307px;height:19px;border:1px dotted #000"></div>
<svg style="left:363px;top:495px" width="16" height="16" viewBox="0 0 16 16"><circle cx="8" cy="8" r="7.3" fill="#f00a0a" stroke="#f6c020" stroke-width="1.3"/><path d="M6 5.200L10.600 8.700L7.400 10.900Z" fill="#333" stroke="#222" stroke-width="1" stroke-linejoin="round"/><circle cx="6" cy="5.200" r="1.500" fill="#fff" stroke="#222" stroke-width="1.300"/><circle cx="10.600" cy="8.700" r="1.500" fill="#fff" stroke="#222" stroke-width="1.300"/><circle cx="7.400" cy="10.900" r="1.500" fill="#fff" stroke="#222" stroke-width="1.300"/></svg>
<span class="t" style="left:382.3px;top:496px;letter-spacing:-0.162px;">Edit cgMLST Early Warning Alert Definitions (1)</span>
<span class="t" style="left:263.8px;top:529px;letter-spacing:0.002px;">Description:</span>
<div class="lb" style="left:347px;top:529px;width:640px;height:60px;border-right:none"></div>
<span class="t" style="left:252.46px;top:623px;letter-spacing:-0.305px;">Access Control</span>
<div class="a" style="left:328px;top:630px;width:655px;height:1px;background:#a0a0a0"></div>
<div class="a" style="left:252px;top:661px;width:731px;height:72px;background:#fff;border-top:1px solid #d9d9d9;border-left:1px solid #d9d9d9"></div>
<div class="a" style="left:374px;top:644px;width:109px;height:18px;background:#f0f0f0;border:1px solid #d9d9d9;border-left:none"></div>
<div class="a" style="left:483px;top:644px;width:127px;height:18px;background:#f0f0f0;border:1px solid #d9d9d9;border-left:none"></div>
<div class="a" style="left:252px;top:641px;width:122px;height:21px;background:#fff;border:1px solid #d9d9d9;border-bottom:none"></div>
<span class="t" style="left:257.9px;top:644px;letter-spacing:-0.087px;">Project Access Control</span>
<span class="t" style="left:377.6px;top:646px;letter-spacing:-0.113px;">Defaults for Samples</span>
<span class="t" style="left:487.6px;top:646px;letter-spacing:-0.014px;">Defaults for Task Entries</span>
<span class="t" style="left:260.0px;top:676px;letter-spacing:0.027px;">Project Owner:</span>
<div class="a" style="left:376px;top:672px;width:84px;height:22px;background:#f0f0f0;border:1px solid #9a9fa8"></div>
<span class="t" style="left:378.83px;top:676px;letter-spacing:-0.300px;transform:scaleX(0.9621);transform-origin:0.46px 0;">demo</span>
<span class="t" style="left:260.82px;top:702px;letter-spacing:-0.099px;">View Project Definition:</span>
<div class="a" style="left:376px;top:698px;width:84px;height:22px;background:#e1e1e1;border:1px solid #a6abb4"></div>
<svg style="left:380px;top:701px;overflow:hidden" width="16" height="16" viewBox="0 0 16 16"><rect x="0" y="0" width="16" height="16" fill="#fff"/><circle cx="2.6" cy="2.6" r="2.3" fill="#fff" stroke="#6c6c6c" stroke-width=".75"/><circle cx="13.4" cy="2.6" r="2.3" fill="#fff" stroke="#6c6c6c" stroke-width=".75"/><circle cx="8" cy="3.4" r="2.5" fill="#fff" stroke="#6c6c6c" stroke-width=".75"/><circle cx="2.6" cy="6.6" r="2.6" fill="#fff" stroke="#6c6c6c" stroke-width=".75"/><circle cx="13.4" cy="6.6" r="2.6" fill="#fff" stroke="#6c6c6c" stroke-width=".75"/><circle cx="8" cy="7.6" r="2.8" fill="#fff" stroke="#6c6c6c" stroke-width=".75"/><path d="M0 13.2Q2.6 15.6 5.4 13.2V16H0ZM10.6 13.2Q13.4 15.6 16 13.2V16H10.600Z" fill="#6c6c6c" opacity=".85"/><circle cx="2.6" cy="10.8" r="2.9" fill="#fff" stroke="#6c6c6c" stroke-width=".75"/><circle cx="13.4" cy="10.8" r="2.9" fill="#fff" stroke="#6c6c6c" stroke-width=".75"/><circle cx="8" cy="12.2" r="3.2" fill="#fff" stroke="#6c6c6c" stroke-width=".75"/><path d="M5 15.6Q8 16.600 11 15.6" fill="none" stroke="#6c6c6c" stroke-width=".9"/></svg>
<span class="t" style="left:400.16px;top:702px;letter-spacing:-0.312px;">Anyone</span>
<svg style="left:445px;top:707px" width="9" height="6" viewBox="0 0 9 6"><path d="M.4 .6L4.5 4.7L8.6 .6" fill="none" stroke="#404040" stroke-width="1.05"/></svg>
<div class="a" style="left:464px;top:698px;width:84px;height:22px;background:#cccccc;border:1px solid #bfbfbf"></div>
<svg style="left:533px;top:707px" width="9" height="6" viewBox="0 0 9 6"><path d="M.4 .6L4.5 4.7L8.6 .6" fill="none" stroke="#9a9a9a" stroke-width="1.05"/></svg>
<div class="a" style="left:252px;top:724px;width:731px;height:9px;overflow:hidden"><span class="t" style="left:8.0px;top:4px;letter-spacing:-0.013px;">Edit Project Definition:</span><div class="a" style="left:124px;top:0;width:84px;height:22px;background:#e1e1e1;border:1px solid #adadad"></div><svg style="left:128px;top:3px;overflow:hidden" width="16" height="16" viewBox="0 0 16 16"><rect x="0" y="0" width="16" height="16" fill="#fff"/><circle cx="2.6" cy="2.6" r="2.3" fill="#fff" stroke="#6c6c6c" stroke-width=".75"/><circle cx="13.4" cy="2.6" r="2.3" fill="#fff" stroke="#6c6c6c" stroke-width=".75"/><circle cx="8" cy="3.4" r="2.5" fill="#fff" stroke="#6c6c6c" stroke-width=".75"/><circle cx="2.6" cy="6.6" r="2.6" fill="#fff" stroke="#6c6c6c" stroke-width=".75"/><circle cx="13.4" cy="6.6" r="2.6" fill="#fff" stroke="#6c6c6c" stroke-width=".75"/><circle cx="8" cy="7.6" r="2.8" fill="#fff" stroke="#6c6c6c" stroke-width=".75"/><path d="M0 13.2Q2.6 15.6 5.4 13.2V16H0ZM10.6 13.2Q13.4 15.6 16 13.2V16H10.600Z" fill="#6c6c6c" opacity=".85"/><circle cx="2.6" cy="10.8" r="2.9" fill="#fff" stroke="#6c6c6c" stroke-width=".75"/><circle cx="13.4" cy="10.8" r="2.9" fill="#fff" stroke="#6c6c6c" stroke-width=".75"/><circle cx="8" cy="12.2" r="3.2" fill="#fff" stroke="#6c6c6c" stroke-width=".75"/><path d="M5 15.6Q8 16.600 11 15.6" fill="none" stroke="#6c6c6c" stroke-width=".9"/></svg><span class="t" style="left:148.16px;top:4px;letter-spacing:-0.312px;">Anyone</span><div class="a" style="left:212px;top:0;width:84px;height:22px;background:#cccccc;border:1px solid #bfbfbf"></div></div>
<div class="btn" style="left:862px;top:666px;width:122px;height:23px;border-right:none"></div>
<span class="t" style="left:876.53px;top:670px;letter-spacing:-0.395px;">Quick Choose</span>
<svg style="left:946px;top:669px" width="16" height="16" viewBox="0 0 16 16"><path d="M1.4 14.6L8.6 7.4" stroke="#3a3a3a" stroke-width="2" stroke-linecap="round"/><path d="M1.4 14.6L8.6 7.4" stroke="#c9c9c9" stroke-width=".7"/><path d="M10.6 .4L11.6 3.4L14.8 2.6L12.8 5L15 7.4L11.8 7.2L10.8 10.2L9.6 7.2L6.4 7.6L8.6 5.2L6.6 2.6L9.6 3.4Z" fill="#f7e93a" stroke="#a8a000" stroke-width=".6"/></svg>
<svg style="left:964px;top:675px" width="7" height="4" viewBox="0 0 7 4"><path d="M0 0H7L3.5 4Z" fill="#000"/></svg>
<div class="a" style="left:983px;top:111px;width:17px;height:622px;background:#f0f0f0;border-left:1px solid #fff"></div>
<div class="a" style="left:984px;top:128px;width:15px;height:532px;background:#cdcdcd"></div>
<svg style="left:987.8px;top:116.9px" width="7.4" height="6" viewBox="0 0 7.4 6"><path d="M0 5.800H1.7L3.7 3.300L5.7 5.800H7.4V4.5L3.7 .1L0 4.5Z" fill="#505050"/></svg>
<svg style="left:987.8px;top:721.9px" width="7.4" height="6" viewBox="0 0 7.4 6"><path d="M0 .2H1.7L3.7 2.700L5.7 .2H7.4V1.5L3.7 5.900L0 1.5Z" fill="#505050"/></svg>
<div class="a" style="left:239px;top:733px;width:761px;height:17px;background:#f0f0f0;border-top:1px solid #fff"></div>
<div class="a" style="left:256px;top:734px;width:694px;height:15px;background:#cdcdcd"></div>
<svg style="left:243.8px;top:737.9px" width="6.4" height="7.2" viewBox="0 0 6.4 7.2"><path d="M6.200 0V1.700L3.100 3.600L6.200 5.500V7.200H5L.1 3.600L5 0Z" fill="#505050"/></svg>
<svg style="left:971.8px;top:737.9px" width="6.4" height="7.2" viewBox="0 0 6.4 7.2"><path d="M.2 0V1.700L3.300 3.600L.2 5.500V7.200H1.400L6.300 3.600L1.400 0Z" fill="#505050"/></svg>
<div class="a" style="left:983px;top:733px;width:17px;height:17px;background:#f0f0f0"></div>
<svg style="left:10px;top:767px" width="16" height="16" viewBox="0 0 16 16"><circle cx="8" cy="8" r="7.5" fill="#fff" stroke="#1d4c96" stroke-width="1"/><circle cx="8" cy="8" r="5.9" fill="url(#gh)"/><text x="4.700" y="12.300" font-family="Liberation Sans" font-weight="bold" font-size="11.5" fill="#fff">?</text></svg>
<div class="btn" style="left:836px;top:765px;width:93px;height:21px"></div>
<span class="t" style="left:850.13px;top:768px;letter-spacing:-0.285px;">Save &amp; Close</span>
<div class="btn" style="left:936px;top:765px;width:57px;height:21px"></div>
<span class="t" style="left:950.17px;top:768px;letter-spacing:-0.300px;transform:scaleX(0.9778);transform-origin:0.53px 0;">Close</span>
<div class="a" style="left:1px;top:1px;width:1px;height:80px;background:#fdfdfd"></div>
<div class="a" style="left:1px;top:82px;width:1px;height:710px;background:#fdfdfd"></div>
<div class="a" style="left:1003px;top:31px;width:1px;height:761px;background:#fdfdfd"></div>
<div class="a" style="left:1px;top:791px;width:1003px;height:1px;background:#fdfdfd"></div>
<div class="a" style="left:0;top:0;width:1px;height:793px;background:linear-gradient(#5c6066,#3a4048 30%,#26313c)"></div>
<div class="a" style="left:0;top:0;width:1005px;height:1px;background:#2b3a48"></div>
<div class="a" style="left:0;top:792px;width:1005px;height:1px;background:#2a3640"></div>
<div class="a" style="left:1004px;top:0;width:1px;height:793px;background:#2a3a4a"></div>
</div>
</body>
</html>
